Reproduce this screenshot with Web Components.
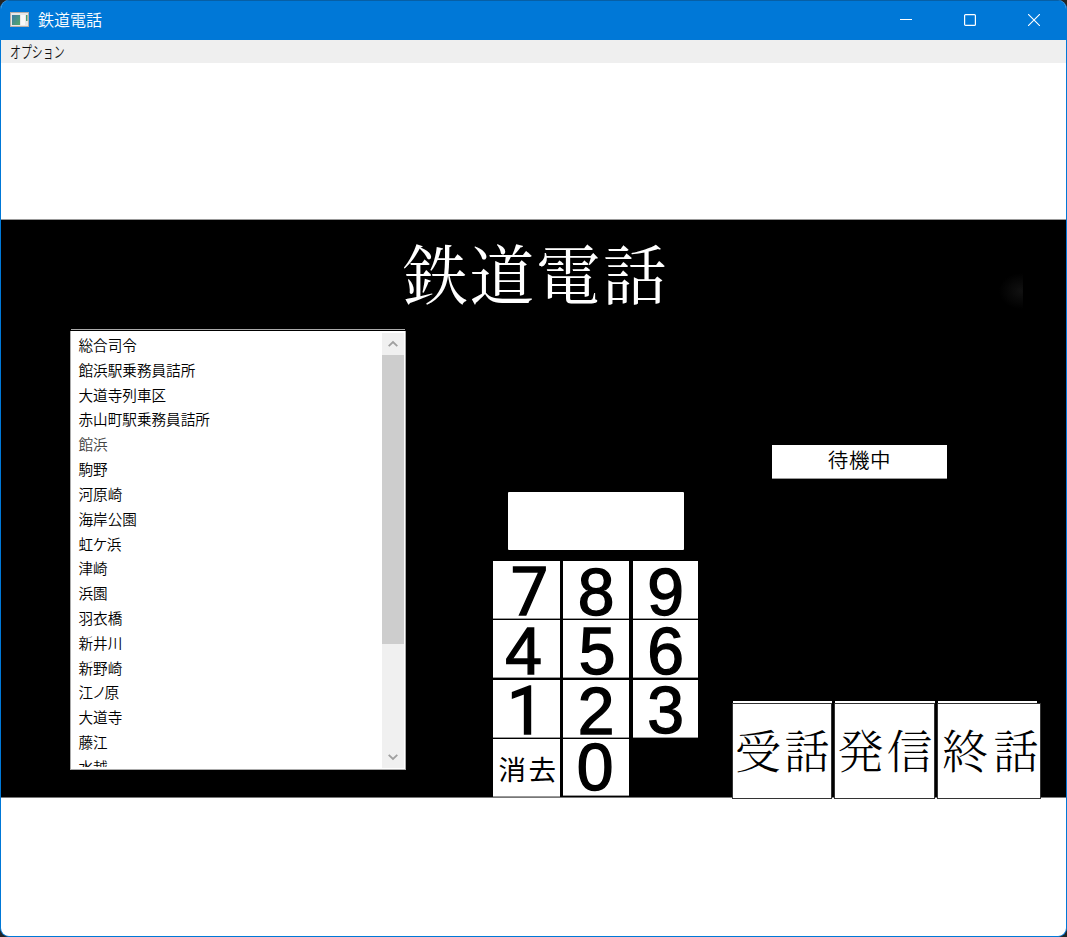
<!DOCTYPE html>
<html lang="ja">
<head>
<meta charset="utf-8">
<title>鉄道電話</title>
<style>
html,body{margin:0;height:100%;background:#242424;overflow:hidden}
body{font-family:"Noto Sans CJK JP","Liberation Sans",sans-serif}
</style>
</head>
<body>
<phone-window></phone-window>
<script>
const define=(name,html)=>customElements.define(name,class extends HTMLElement{
  constructor(){super();this.attachShadow({mode:'open'}).innerHTML=html;}
});

define('title-bar',`<style>
:host{display:flex;height:40px;flex:none;background:#0078d7;color:#fff;align-items:center;box-shadow:inset 0 1px #075fa5;box-sizing:border-box}
.icon{margin-left:9px;width:20px;height:16px}
.name{margin:-2px 0 0 8px;font-size:16px;line-height:24px;flex:1;font-weight:350}
.b{width:64px;height:40px;display:flex;align-items:center;justify-content:center}
</style>
<svg class="icon" viewBox="0 0 20 16"><defs><linearGradient id="g" x1="0" y1="0" x2="1" y2="1"><stop stop-color="#397caa"/><stop offset="1" stop-color="#55a867"/></linearGradient></defs><rect x=".5" y=".5" width="18" height="14" fill="#e8e8e8" stroke="#b5aea8"/><rect x="2" y="3" width="8" height="10" fill="url(#g)"/><rect x="11" y="3" width="4" height="10" fill="#f9f9f9"/><path d="M16 3h1.5v6h-1.5z" fill="#4c9c72"/></svg>
<span class="name">鉄道電話</span>
<div class="b"><svg width="12" height="12"><path d="M0 5.5h12" stroke="#fff"/></svg></div>
<div class="b"><svg width="12" height="12"><rect x=".6" y=".6" width="10.8" height="10.8" rx="1" fill="none" stroke="#fff" stroke-width="1.2"/></svg></div>
<div class="b"><svg width="12" height="12"><path d="M0 0l12 12M12 0L0 12" stroke="#fff" stroke-width="1.1"/></svg></div>`);

define('menu-bar',`<style>
:host{display:flex;height:23px;flex:none;background:#efefef;padding-left:9px;align-items:center;color:#111}
span{font-size:15.5px;line-height:22px;margin-top:-2px;transform:scaleX(.705);transform-origin:0 50%;white-space:nowrap;font-weight:350}
</style><span>オプション</span>`);

define('station-row',`<style>
:host{display:block;height:24.82px;line-height:24.8px;font-size:14.6px;padding-left:8.5px;white-space:nowrap;color:#000;font-weight:350;font-feature-settings:"palt"}
:host([dim]){color:#444}
</style><slot></slot>`);

define('scroll-rail',`<style>
:host{display:flex;flex-direction:column;width:23px;background:#f0f0f0;border-right:1px solid #fff;box-sizing:border-box;margin:2px 0 1px}
.a{height:22px;display:flex;align-items:center;justify-content:center}
.thumb{height:289px;background:#cdcdcd}.gap{flex:1}
path{fill:none;stroke:#a0a0a0;stroke-width:1.8}
</style><div class="a"><svg width="10" height="8"><path d="M.7 6.2L5 2l4.3 4.2"/></svg></div><div class="thumb"></div><div class="gap"></div><div class="a"><svg width="10" height="8"><path d="M.7 1.8L5 6l4.3-4.2"/></svg></div>`);

define('station-list',`<style>
:host{display:block;width:336px;height:441px}
.line{height:1px;width:334px;margin-left:1px;background:#aaa}
.box{margin-top:1px;height:439px;box-sizing:border-box;display:flex;background:#fff;border:1px solid #aaa;border-width:0 1px 1px 1px}
.rows{flex:1;overflow:hidden;height:436px;padding-top:2px;box-sizing:border-box;margin-left:-1px}
</style><div class="line"></div><div class="box"><div class="rows"><slot></slot></div><scroll-rail></scroll-rail></div>`);

define('dial-key',`<style>
:host{display:flex;background:#fff;justify-content:center;height:var(--h,58px);color:#000;border-bottom:1px solid #999;box-sizing:border-box}
span{display:block;font:66px/56px var(--face,"Liberation Sans"),sans-serif;-webkit-text-stroke:1.4px #000;transform:translate(var(--dx,0px),var(--dy,3px))}
:host([word]) span{font:400 27.5px/58px "Noto Sans CJK JP",sans-serif;letter-spacing:2.5px;white-space:nowrap;-webkit-text-stroke:0}
</style><span><slot></slot></span>`);

define('dial-pad',`<style>
:host{display:block}
.display{width:176px;height:58px;background:#fff;border-radius:1px;margin:0 0 11px 15px}
.keys{display:grid;grid-template-columns:67px 67px 66px;column-gap:3px;row-gap:1px;grid-template-rows:58px 59px 58px 58px;align-items:start}
::slotted(.mid){margin-right:1px}
::slotted(.end){margin-right:1px}
</style><div class="display"></div><div class="keys"><slot></slot></div>`);

define('status-label',`<style>
:host{display:flex;align-items:center;justify-content:center;width:175px;height:34px;background:#fff;color:#000;border-bottom:1px solid #999;box-sizing:border-box;font-size:20.5px;line-height:30px;letter-spacing:.6px;font-weight:350}
span{transform:translateY(-3px)}
</style><span><slot></slot></span>`);

define('call-button',`<style>
:host{display:block;height:98px;color:#000}
.cap{height:2px;background:#fff;margin:0 var(--cap,0px) 0 1px}
.face{height:96px;box-sizing:border-box;border:1px solid #333;background:#fff;display:flex;align-items:center;justify-content:center;white-space:nowrap;font:300 46px/60px "Noto Serif CJK JP","Noto Serif JP","Noto Sans CJK JP",serif;letter-spacing:var(--ls,3px)}
.face span{transform:translate(var(--dx,2px),-3px)}
</style><div class="cap"></div><div class="face"><span><slot></slot></span></div>`);

define('phone-stage',`<style>
:host{display:flex;flex-direction:column;height:579px;background:radial-gradient(ellipse 22px 18px at 1020px 71px,#111,transparent) 0 0/1022px 100% no-repeat,#000;border-top:1px solid #999;border-bottom:1px solid #777;box-sizing:border-box}
h1{margin:0;height:109px;box-sizing:border-box;padding:3px 0 0 5px;text-align:center;color:#fff;font:400 64.5px/96px "Noto Serif CJK JP","Noto Serif JP","Noto Sans CJK JP",serif;letter-spacing:2px;flex:none}
.main{display:flex;align-items:flex-start;padding-left:69px;flex:none}
dial-pad{margin:163px 0 0 87px;width:205px}
.right{display:flex;flex-direction:column;margin:116px 0 0 34px}
status-label{margin-left:40px}
.calls{display:grid;grid-template-columns:100px 101px 104px;gap:2px;margin-top:222px}
</style>
<h1>鉄道電話</h1>
<div class="main">
<station-list><station-row>総合司令</station-row><station-row>館浜駅乗務員詰所</station-row><station-row>大道寺列車区</station-row><station-row>赤山町駅乗務員詰所</station-row><station-row dim>館浜</station-row><station-row>駒野</station-row><station-row>河原崎</station-row><station-row>海岸公園</station-row><station-row>虹ケ浜</station-row><station-row>津崎</station-row><station-row>浜園</station-row><station-row>羽衣橋</station-row><station-row>新井川</station-row><station-row>新野崎</station-row><station-row>江ノ原</station-row><station-row>大道寺</station-row><station-row>藤江</station-row><station-row>水越</station-row></station-list>
<dial-pad><dial-key style="--dx:3px;--dy:4px;--face:Roboto">7</dial-key><dial-key class="mid">8</dial-key><dial-key class="end">9</dial-key><dial-key style="--dx:-3px">4</dial-key><dial-key class="mid" style="--dx:1px">5</dial-key><dial-key class="end">6</dial-key><dial-key style="--dx:-1px;--dy:4px;--face:Roboto">1</dial-key><dial-key class="mid" style="--dy:3px">2</dial-key><dial-key class="end" style="--dy:2px">3</dial-key><dial-key word style="--dx:2px;--dy:0px">消去</dial-key><dial-key class="mid" style="--h:57px;--dx:-1px;--dy:0px">0</dial-key></dial-pad>
<div class="right"><status-label>待機中</status-label><div class="calls"><call-button>受話</call-button><call-button>発信</call-button><call-button style="--cap:4px;--ls:5px;--dx:4px">終話</call-button></div></div>
</div>`);

define('phone-window',`<style>
:host{display:flex;flex-direction:column;width:1067px;height:937px;box-sizing:border-box;background:#fff;border:1px solid #0078d7;border-top:0;border-radius:9px;overflow:hidden}
phone-stage{margin-top:156px;flex:none}
</style><title-bar></title-bar><menu-bar></menu-bar><phone-stage></phone-stage>`);
</script>
</body>
</html>
